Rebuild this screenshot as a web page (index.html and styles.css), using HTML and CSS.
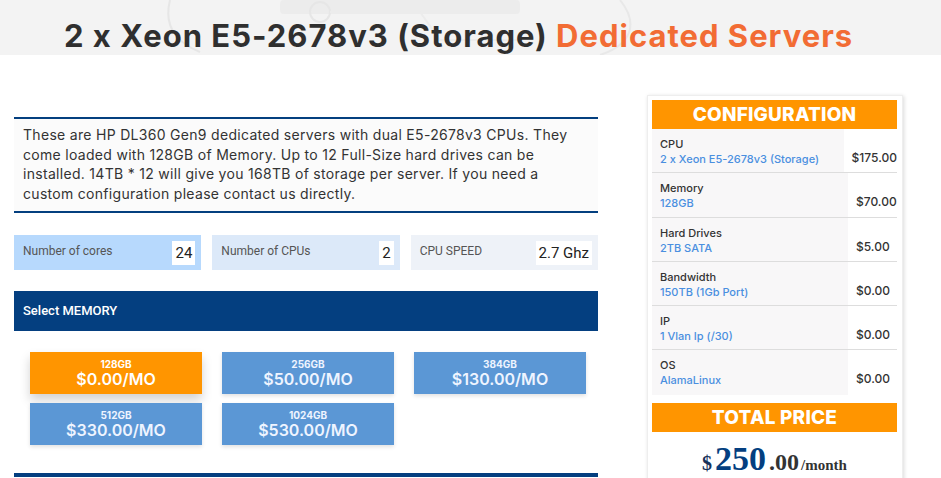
FILE: index.html
```html
<!DOCTYPE html>
<html>
<head>
<meta charset="utf-8">
<link rel="stylesheet" href="styles.css">
</head>
<body>
<header class="hero">
  <svg class="hero-art" width="941" height="55" viewBox="0 0 941 55" aria-hidden="true">
    <path d="M170 0 C165 20 170 40 200 52" fill="none" stroke="#e6e6e6" stroke-width="2"/>
    <rect x="280" y="0" width="240" height="14" rx="4" fill="#ececec"/>
    <path d="M620 0 C640 25 630 45 600 55" fill="none" stroke="#e8e8e8" stroke-width="2"/>
    <circle cx="320" cy="12" r="10" fill="none" stroke="#e6e6e6" stroke-width="2"/>
    <path d="M330 12 L420 12 L440 40 L520 40" fill="none" stroke="#ececec" stroke-width="2"/>
  </svg>
  <h1 class="title">2 x Xeon E5-2678v3 (Storage) <span class="accent">Dedicated Servers</span></h1>
</header>

<main class="page">
  <section class="left">
    <div class="desc">These are HP DL360 Gen9 dedicated servers with dual E5-2678v3 CPUs. They come loaded with 128GB of Memory. Up to 12 Full-Size hard drives can be installed. 14TB * 12 will give you 168TB of storage per server. If you need a custom configuration please contact us directly.</div>

    <div class="stats">
      <div class="stat stat-1"><span class="stat-label">Number of cores</span><span class="stat-val">24</span></div>
      <div class="stat stat-2"><span class="stat-label">Number of CPUs</span><span class="stat-val">2</span></div>
      <div class="stat stat-3"><span class="stat-label">CPU SPEED</span><span class="stat-val">2.7 Ghz</span></div>
    </div>

    <div class="section-bar">Select MEMORY</div>

    <div class="mem-grid">
      <div class="mem active"><span class="mem-size">128GB</span><span class="mem-price">$0.00/MO</span></div>
      <div class="mem"><span class="mem-size">256GB</span><span class="mem-price">$50.00/MO</span></div>
      <div class="mem"><span class="mem-size">384GB</span><span class="mem-price">$130.00/MO</span></div>
      <div class="mem"><span class="mem-size">512GB</span><span class="mem-price">$330.00/MO</span></div>
      <div class="mem"><span class="mem-size">1024GB</span><span class="mem-price">$530.00/MO</span></div>
    </div>

    <div class="bottom-line"></div>
  </section>

  <aside class="card">
    <div class="card-head">CONFIGURATION</div>
    <div class="row"><div class="row-main"><span class="row-label">CPU</span><span class="row-value">2 x Xeon E5-2678v3 (Storage)</span></div><div class="row-price">$175.00</div></div>
    <div class="row"><div class="row-main"><span class="row-label">Memory</span><span class="row-value">128GB</span></div><div class="row-price">$70.00</div></div>
    <div class="row"><div class="row-main"><span class="row-label">Hard Drives</span><span class="row-value">2TB SATA</span></div><div class="row-price">$5.00</div></div>
    <div class="row"><div class="row-main"><span class="row-label">Bandwidth</span><span class="row-value">150TB (1Gb Port)</span></div><div class="row-price">$0.00</div></div>
    <div class="row"><div class="row-main"><span class="row-label">IP</span><span class="row-value">1 Vlan Ip (/30)</span></div><div class="row-price">$0.00</div></div>
    <div class="row last"><div class="row-main"><span class="row-label">OS</span><span class="row-value">AlamaLinux</span></div><div class="row-price">$0.00</div></div>
    <div class="card-head total-head">TOTAL PRICE</div>
    <div class="total"><span class="t-cur">$</span><span class="t-big">250</span><span class="t-dec">.00</span><span class="t-per">/month</span></div>
  </aside>
</main>
</body>
</html>
```

FILE: styles.css
```css
* { box-sizing: border-box; }
html, body { margin: 0; padding: 0; }
body {
  width: 941px;
  height: 478px;
  overflow: hidden;
  background: #fff;
  font-family: "Inter", "Open Sans", sans-serif;
  color: #333;
}

.hero {
  position: relative;
  height: 55px;
  background: #f3f3f3;
  overflow: visible;
}
.hero-art { position: absolute; left: 0; top: 0; }
.title {
  position: relative;
  margin: 0;
  padding: 18px 0 0 64px;
  font-size: 31px;
  line-height: 36px;
  font-weight: 700;
  color: #2f2f2f;
  white-space: nowrap;
  letter-spacing: 1px;
}
.accent { color: #f26c34; }

.page {
  display: flex;
  align-items: flex-start;
  padding-left: 14px;
}

.left {
  width: 584px;
  margin-top: 62px;
}

.desc {
  border-top: 2px solid #033f7f;
  border-bottom: 2px solid #033f7f;
  background: #fbfbfb;
  padding: 6px 19px 8px 9px;
  font-size: 14px;
  letter-spacing: 0.3px;
  line-height: 19.5px;
  color: #333;
}

.stats {
  display: flex;
  gap: 11px;
  margin-top: 22px;
}
.stat {
  flex: 1;
  height: 35px;
  display: flex;
  align-items: center;
  justify-content: space-between;
  padding: 0 6px 0 9px;
  font-family: "Roboto", sans-serif;
}
.stat-1 { background: #b7d9fd; }
.stat-2 { background: #dce9f9; }
.stat-3 { background: #eef2f8; }
.stat-label { font-size: 12px; color: #555; margin-top: -3px; }
.stat-val {
  background: #fff;
  font-size: 15px;
  color: #222;
  padding: 3px 3px;
  line-height: 18px;
}

.section-bar {
  margin-top: 21px;
  height: 40px;
  background: #043f80;
  color: #fff;
  font-family: "Roboto", sans-serif;
  font-weight: 500;
  font-size: 13px;
  line-height: 40px;
  padding-left: 9px;
}

.mem-grid {
  display: grid;
  grid-template-columns: repeat(3, 172px);
  column-gap: 20px;
  row-gap: 9px;
  padding-left: 16px;
  margin-top: 21px;
}
.mem {
  height: 42px;
  background: #5b97d5;
  color: #eef4ff;
  display: flex;
  flex-direction: column;
  align-items: center;
  justify-content: center;
  box-shadow: 0 2px 4px rgba(0,0,0,0.12);
}
.mem.active {
  background: #ff9500;
  color: #fff;
  box-shadow: 0 6px 10px rgba(0,0,0,0.18);
}
.mem-size { font-size: 10px; font-weight: 700; line-height: 12px; }
.mem-price { font-size: 16px; font-weight: 600; line-height: 19px; }

.bottom-line {
  margin-top: 28px;
  height: 4px;
  background: #043f80;
}

.card {
  width: 256px;
  margin-left: 49px;
  margin-top: 40px;
  padding: 4px 5px 4px 4px;
  background: #fff;
  border: 1px solid #eee;
  box-shadow: 1px 1px 4px rgba(0,0,0,0.15);
}
.card-head {
  height: 29px;
  background: #ff9500;
  color: #fff;
  font-weight: 800;
  font-size: 19px;
  line-height: 29px;
  text-align: center;
  letter-spacing: 0.2px;
}
.row {
  display: flex;
  height: 44.3px;
  border-bottom: 1px solid #ddd;
}
.row.last { border-bottom: none; }
.row-main {
  width: 196px;
  background: #f8f7f8;
  padding: 8px 0 0 8px;
  display: flex;
  flex-direction: column;
}
.row-label { font-size: 11px; line-height: 14px; color: #333; font-weight: 500; }
.row-value { font-size: 11px; line-height: 16px; color: #4a8fe0; font-weight: 500; }
.row-price {
  flex: 1;
  padding: 22px 0 0 8px;
  font-size: 12px;
  line-height: 14px;
  color: #333;
  font-weight: 500;
}
.total-head { margin-top: 8px; }
.total {
  text-align: center;
  font-family: "Liberation Serif", serif;
  font-weight: 700;
  padding-top: 10px;
  line-height: 34px;
  white-space: nowrap;
}
.t-cur { font-size: 20px; color: #17325a; }
.t-big { font-size: 34px; color: #043f80; margin-left: 3px; }
.t-dec { font-size: 24px; color: #333; margin-left: 3px; }
.t-per { font-size: 15px; color: #333; margin-left: 2px; }
```
